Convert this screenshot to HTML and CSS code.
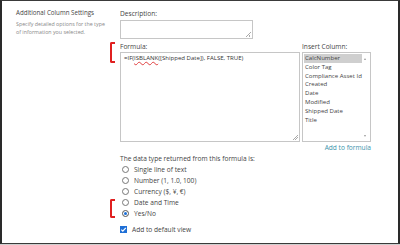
FILE: index.html
```html
<!DOCTYPE html>
<html>
<head>
<meta charset="utf-8">
<link rel="stylesheet" href="styles.css">
</head>
<body>
<div class="frame">
  <div class="side">
    <div class="side-title">Additional Column Settings</div>
    <div class="side-desc">Specify detailed options for the type of information you selected.</div>
  </div>
  <div class="main">
    <div class="label">Description:</div>
    <div class="desc-box"><span class="grip"></span></div>
    <div class="formula-row">
      <span class="bracket bracket-top"></span>
      <div class="formula-col">
        <div class="label">Formula:</div>
        <div class="formula-box">=IF(<span class="spell">ISBLANK</span>([Shipped Date]), FALSE, TRUE)<span class="grip"></span></div>
      </div>
      <div class="insert-col">
        <div class="label">Insert Column:</div>
        <div class="listbox">
          <div class="items">
            <div class="item selected">CalcNumber</div>
            <div class="item">Color Tag</div>
            <div class="item">Compliance Asset Id</div>
            <div class="item">Created</div>
            <div class="item">Date</div>
            <div class="item">Modified</div>
            <div class="item">Shipped Date</div>
            <div class="item">Title</div>
          </div>
          <div class="scroll">
            <span class="arrow up"></span>
            <span class="arrow down"></span>
          </div>
        </div>
        <div class="add-link">Add to formula</div>
      </div>
    </div>
    <div class="label type-label">The data type returned from this formula is:</div>
    <div class="radios">
      <span class="bracket bracket-bottom"></span>
      <div class="radio"><span class="circle"></span>Single line of text</div>
      <div class="radio"><span class="circle"></span>Number (1, 1.0, 100)</div>
      <div class="radio"><span class="circle"></span>Currency ($, ¥, €)</div>
      <div class="radio"><span class="circle"></span>Date and Time</div>
      <div class="radio"><span class="circle checked"></span>Yes/No</div>
    </div>
    <div class="check-row">
      <span class="checkbox"><svg width="7" height="7" viewBox="0 0 7 7"><path d="M1.3 3.6 L2.8 5.1 L5.8 1.8" fill="none" stroke="#fff" stroke-width="1.2"/></svg></span>
      <span>Add to default view</span>
    </div>
  </div>
</div>
</body>
</html>
```
FILE: styles.css
```css
* { box-sizing: border-box; }
html, body { margin: 0; padding: 0; background: #fff; }
body {
  font-family: "Open Sans", "Noto Sans", sans-serif;
  color: #444;
  width: 400px;
  height: 245px;
  overflow: hidden;
}
.frame {
  width: 400px;
  height: 244px;
  border-top: 1px solid #3a3a3a;
  border-left: 2px solid #2a2a2a;
  border-right: 2px solid #2a2a2a;
  border-bottom: 1px solid #3a3a3a;
  display: flex;
  box-shadow: 0 1px 0 #cfcfcf;
}
.side {
  width: 118px;
  padding: 7px 0 0 14px;
}
.side-title {
  font-size: 6.2px;
  line-height: 9px;
  color: #444;
  white-space: nowrap;
}
.side-desc {
  margin-top: 3px;
  font-size: 5.3px;
  line-height: 8px;
  color: #888;
  width: 92px;
}
.main {
  padding-top: 8px;
  display: flex;
  flex-direction: column;
}
.label {
  font-size: 6.6px;
  line-height: 10px;
  color: #444;
  white-space: nowrap;
}
.desc-box {
  position: relative;
  width: 133px;
  height: 19px;
  border: 1px solid #c6c6c6;
  margin-top: 1px;
}
.grip {
  position: absolute;
  right: 1px;
  bottom: 1px;
  width: 5px;
  height: 5px;
  background: linear-gradient(135deg, transparent 45%, #aaa 45%, #aaa 55%, transparent 55%, transparent 70%, #aaa 70%, #aaa 80%, transparent 80%);
}
.formula-row {
  position: relative;
  display: flex;
  margin-top: 3px;
}
.bracket {
  position: absolute;
  border: 2px solid #e02020;
  border-right: none;
  width: 5px;
  border-radius: 2px 0 0 2px;
}
.bracket-top {
  left: -10px;
  top: 0;
  height: 21px;
}
.bracket-bottom {
  left: -10px;
  top: 35px;
  height: 19px;
}
.formula-col { width: 182px; }
.formula-box {
  position: relative;
  width: 180px;
  height: 90px;
  border: 1px solid #c6c6c6;
  padding: 1px 3px;
  font-size: 6.05px;
  line-height: 8px;
  color: #333;
  white-space: nowrap;
}
.spell {
  text-decoration: underline wavy #e04040;
  text-decoration-thickness: 0.6px;
  text-underline-offset: 1px;
}
.insert-col {
  display: flex;
  flex-direction: column;
}
.listbox {
  width: 69px;
  height: 90px;
  border: 1px solid #c6c6c6;
  display: flex;
  padding: 1px;
}
.items { flex: 1; }
.item {
  font-size: 6.05px;
  line-height: 8.8px;
  padding-left: 1px;
  color: #444;
  white-space: nowrap;
}
.item.selected { background: #cfcfcf; }
.scroll {
  width: 7px;
  position: relative;
}
.arrow {
  position: absolute;
  left: 2px;
  width: 0;
  height: 0;
  border-left: 1.5px solid transparent;
  border-right: 1.5px solid transparent;
}
.arrow.up { top: 4px; border-bottom: 2px solid #999; }
.arrow.down { bottom: 3px; border-top: 2px solid #999; }
.add-link {
  align-self: flex-end;
  font-size: 6.6px;
  line-height: 10px;
  color: #3b93ab;
  margin-top: 1px;
}
.type-label { margin-top: 1px; }
.radios {
  position: relative;
  padding-left: 2px;
}
.radio {
  display: flex;
  align-items: center;
  height: 11px;
  font-size: 6.6px;
  color: #444;
  white-space: nowrap;
}
.circle {
  width: 7px;
  height: 7px;
  border: 1px solid #777;
  border-radius: 50%;
  margin-right: 5px;
  flex: none;
  position: relative;
}
.circle.checked { border-color: #555; }
.circle.checked::after {
  content: "";
  position: absolute;
  left: 1px;
  top: 1px;
  width: 3px;
  height: 3px;
  border-radius: 50%;
  background: #1a6fd8;
}
.check-row {
  display: flex;
  align-items: center;
  margin-top: 6px;
  font-size: 6.6px;
  color: #444;
  white-space: nowrap;
}
.checkbox {
  width: 7px;
  height: 7px;
  background: #1f6fd6;
  margin-right: 5px;
  display: flex;
  align-items: center;
  justify-content: center;
}
.checkbox svg { display: block; }
```
